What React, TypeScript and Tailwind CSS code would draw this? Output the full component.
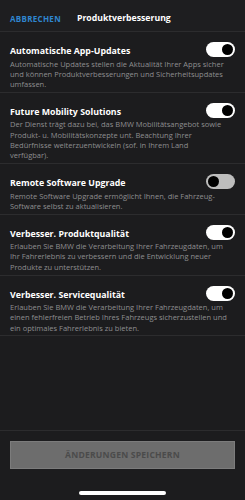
import React, { useState } from 'react';

type Setting = {
  id: string;
  title: string;
  description: string;
  enabled: boolean;
};

const initialSettings: Setting[] = [
  {
    id: 'app-updates',
    title: 'Automatische App-Updates',
    description:
      'Automatische Updates stellen die Aktualität Ihrer Apps sicher und können Produktverbesserungen und Sicherheitsupdates umfassen.',
    enabled: true,
  },
  {
    id: 'mobility',
    title: 'Future Mobility Solutions',
    description:
      'Der Dienst trägt dazu bei, das BMW Mobilitätsangebot sowie Produkt- u. Mobilitätskonzepte unt. Beachtung Ihrer Bedürfnisse weiterzuentwickeln (sof. in Ihrem Land\nverfügbar).',
    enabled: true,
  },
  {
    id: 'remote-upgrade',
    title: 'Remote Software Upgrade',
    description: 'Remote Software Upgrade ermöglicht Ihnen, die Fahrzeug-Software selbst zu aktualisieren.',
    enabled: false,
  },
  {
    id: 'product-quality',
    title: 'Verbesser. Produktqualität',
    description:
      'Erlauben Sie BMW die Verarbeitung Ihrer Fahrzeugdaten, um Ihr Fahrerlebnis zu verbessern und die Entwicklung neuer Produkte zu unterstützen.',
    enabled: true,
  },
  {
    id: 'service-quality',
    title: 'Verbesser. Servicequalität',
    description:
      'Erlauben Sie BMW die Verarbeitung Ihrer Fahrzeugdaten, um einen fehlerfreien Betrieb Ihres Fahrzeugs sicherzustellen und ein optimales Fahrerlebnis zu bieten.',
    enabled: true,
  },
];

function Toggle({ on, onClick }: { on: boolean; onClick: () => void }) {
  return (
    <button
      onClick={onClick}
      className={`-mt-[3px] flex h-[15px] w-[29px] shrink-0 items-center rounded-full px-[2px] ${
        on ? 'justify-end bg-white' : 'justify-start bg-[#bdbdbd]'
      }`}
    >
      <span className="h-[11px] w-[11px] rounded-full bg-black" />
    </button>
  );
}

export default function App() {
  const [settings, setSettings] = useState(initialSettings);

  const toggle = (id: string) =>
    setSettings((prev) => prev.map((s) => (s.id === id ? { ...s, enabled: !s.enabled } : s)));

  return (
    <div
      className="flex h-[500px] w-[245px] flex-col bg-[#1c1c1e] text-white"
      style={{ fontFamily: '"Open Sans", "Liberation Sans", sans-serif' }}
    >
      <header className="flex h-[32px] items-center gap-[16px] border-b border-[#2c2c2e] bg-[#1e1e20] px-[10px] pt-[7px]">
        <button className="text-[8px] font-bold tracking-[0.3px] text-[#2f86d0]">ABBRECHEN</button>
        <h1 className="text-[8.7px] font-bold">Produktverbesserung</h1>
      </header>

      <div className="flex flex-col">
        {settings.map((s) => (
          <div key={s.id} className="border-b border-[#2c2c2e] px-[10px] pb-[2.5px] pt-[13px]">
            <div className="flex items-center justify-between">
              <span className="text-[8.8px] font-bold leading-[12px]">{s.title}</span>
              <Toggle on={s.enabled} onClick={() => toggle(s.id)} />
            </div>
            <p className="mt-[1.5px] whitespace-pre-line pr-[3px] text-[7.5px] leading-[10.3px] text-[#8e8e90]">
              {s.description}
            </p>
          </div>
        ))}
      </div>

      <div className="mt-auto border-t border-[#2c2c2e] px-[10px] pt-[10px]">
        <button className="flex h-[28px] w-full items-center justify-center border border-[#7c7c7c] bg-[#6d6d6d] text-[8.6px] font-bold tracking-[0.2px] text-[#4b4b4b]">
          ÄNDERUNGEN SPEICHERN
        </button>
        <div className="flex justify-center pb-[5px] pt-[22px]">
          <span className="h-[4px] w-[87px] rounded-full bg-white" />
        </div>
      </div>
    </div>
  );
}
